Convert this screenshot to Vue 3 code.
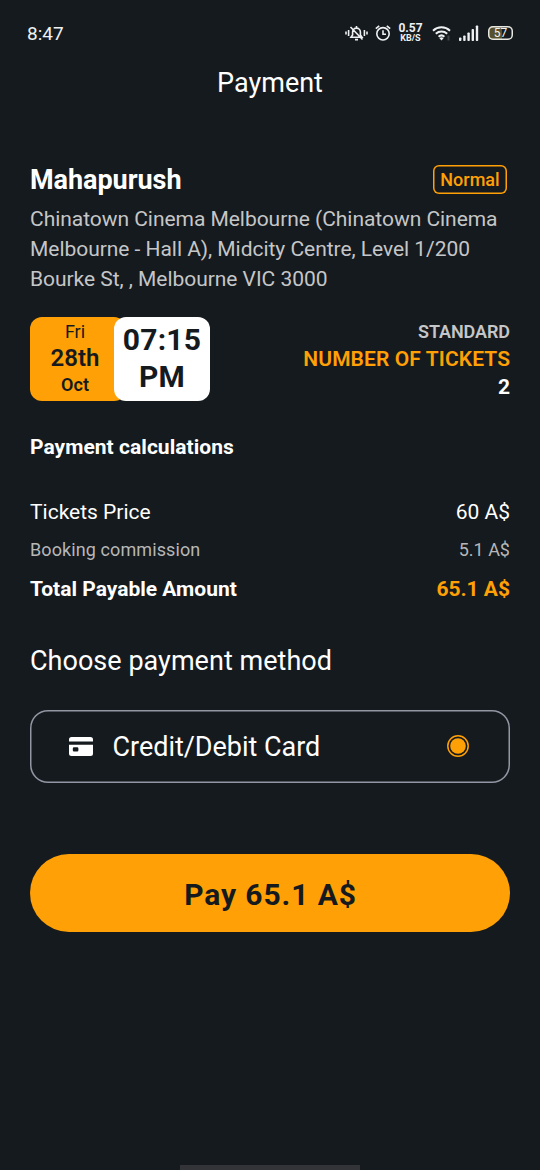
<script setup>
const priceRows = [
  { kind: 'regular', label: 'Tickets Price', value: '60 A$' },
  { kind: 'muted', label: 'Booking commission', value: '5.1 A$' },
  { kind: 'total', label: 'Total Payable Amount', value: '65.1 A$' },
]
</script>

<template>
  <div class="screen">
    <div class="status">
      <span class="clock">8:47</span>
      <div class="indicators">
        <svg class="mute" width="23" height="18" viewBox="0 0 23 18" fill="none" stroke="#eef0f2" stroke-width="1.6">
          <path d="M1 7.500v3M3.600 6v6M19.400 6v6M22 7.500v3" />
          <path d="M6 13.2h11L15.400 11V8a3.900 3.900 0 0 0-7.800 0v3zM10 15.600h3M11.500 2v2M5.500 3l12 12.500" />
        </svg>
        <svg class="alarm" width="16" height="18" viewBox="0 0 16 18" fill="none" stroke="#eef0f2" stroke-width="1.6">
          <circle cx="8" cy="9.800" r="6.200" />
          <path d="M.8 4.700 4.200 1.800M15.200 4.700 11.800 1.800M8 6.300V10.300h3" />
        </svg>
        <div class="speed"><b>0.57</b><span>KB/S</span></div>
        <svg class="wifi" width="20" height="17" viewBox="0 0 20 17" fill="none" stroke="#eef0f2" stroke-width="2">
          <path d="M1 5.700a12.500 12.500 0 0 1 17 0M3.800 8.800a8.400 8.400 0 0 1 11.400 0M6.600 11.700a4.300 4.300 0 0 1 5.800 0" />
          <path d="M7.400 13.200 9.500 15.600l2.100-2.400a3 3 0 0 0-4.200 0z" fill="#eef0f2" stroke="none" />
          <path d="M16.500 10.500v5" stroke="#3c4245" stroke-width="2" />
        </svg>
        <svg class="signal" width="20" height="17" viewBox="0 0 20 17" fill="#eef0f2">
          <rect x="0" y="12.500" width="2.400" height="3.500" rx=".8" />
          <rect x="4.200" y="10.500" width="2.400" height="5.500" rx=".8" />
          <rect x="8.400" y="7.500" width="2.400" height="8.500" rx=".8" />
          <rect x="12.600" y="4" width="2.400" height="12" rx=".8" />
          <rect x="16.800" y="0.500" width="2.400" height="15.500" rx=".8" />
        </svg>
        <div class="battery"><span>57</span></div>
      </div>
    </div>

    <h1 class="title">Payment</h1>

    <main class="content">
      <div class="movie">
        <h2>Mahapurush</h2>
        <span class="tag">Normal</span>
      </div>
      <p class="address">
        Chinatown Cinema Melbourne (Chinatown Cinema<br />Melbourne - Hall A), Midcity Centre, Level 1/200<br />Bourke St, , Melbourne VIC 3000
      </p>

      <div class="session">
        <div class="date">
          <span class="day">Fri</span>
          <span class="num">28th</span>
          <span class="month">Oct</span>
        </div>
        <div class="time"><span>07:15</span><span>PM</span></div>
        <div class="tickets">
          <span class="class">STANDARD</span>
          <span class="caption">NUMBER OF TICKETS</span>
          <span class="count">2</span>
        </div>
      </div>

      <h3 class="subhead">Payment calculations</h3>
      <div class="prices">
        <div v-for="row in priceRows" :key="row.kind" class="row" :class="row.kind">
          <span class="label">{{ row.label }}</span>
          <span class="value">{{ row.value }}</span>
        </div>
      </div>

      <h3 class="choose">Choose payment method</h3>
      <div class="method">
        <svg width="24" height="19" viewBox="0 0 24 19">
          <path d="M0 4.500V2.500A2.500 2.500 0 0 1 2.500 0h19A2.500 2.500 0 0 1 24 2.500v2z" fill="#fff" />
          <path fill-rule="evenodd" d="M0 7.800h24v8.700a2.500 2.500 0 0 1-2.500 2.500h-19A2.500 2.500 0 0 1 0 16.500zM5 10.300a1.200 1.200 0 0 0-1.200 1.200v1.700A1.200 1.200 0 0 0 5 14.400h3.200a1.200 1.200 0 0 0 1.200-1.200v-1.700a1.200 1.200 0 0 0-1.200-1.200z" fill="#fff" />
        </svg>
        <span class="name">Credit/Debit Card</span>
        <svg class="radio" width="22" height="22" viewBox="0 0 22 22">
          <circle cx="11" cy="11" r="10.200" fill="none" stroke="#ffa006" stroke-width="1.500" />
          <circle cx="11" cy="11" r="7.800" fill="#ffa006" />
        </svg>
      </div>

      <button class="pay">Pay 65.1 A$</button>
    </main>
    <div class="handle"></div>
  </div>
</template>

<style>
body {
  background: #151a1e;
}
</style>

<style scoped>
.screen {
  width: 540px;
  height: 1170px;
  box-sizing: border-box;
  display: flex;
  flex-direction: column;
  overflow: hidden;
  background: #151a1e;
  color: #fff;
  font-family: Roboto, 'Liberation Sans', sans-serif;
}
h1, h2, h3, p {
  margin: 0;
}
.status {
  height: 66px;
  padding: 0 27px;
  display: flex;
  align-items: center;
  justify-content: space-between;
}
.clock {
  font-size: 19px;
  color: #eef0f2;
  padding-top: 1px;
}
.indicators {
  display: flex;
  align-items: center;
}
.alarm {
  margin-left: 7px;
  margin-right: 1px;
}
.speed {
  width: 25px;
  margin-left: 6px;
  display: flex;
  flex-direction: column;
  align-items: center;
  color: #eef0f2;
}
.speed b {
  font-size: 12px;
  line-height: 12px;
  margin-top: -2px;
}
.speed span {
  font-size: 9px;
  line-height: 8px;
  font-weight: 700;
}
.wifi {
  margin-left: 9px;
}
.signal {
  margin-left: 7px;
}
.battery {
  width: 25px;
  height: 14px;
  box-sizing: border-box;
  margin-left: 9px;
  box-shadow: inset 0 0 0 1.500px #e8e8e2;
  border-radius: 5px;
  display: flex;
  align-items: center;
  background: linear-gradient(90deg, #56502f 58%, #151a1e 58%);
}
.battery span {
  width: 100%;
  text-align: center;
  font-size: 12px;
  line-height: 12px;
  color: #f2f2ec;
}
.title {
  height: 34px;
  line-height: 34px;
  text-align: center;
  font-size: 27px;
  font-weight: 400;
}
.content {
  padding: 62px 30px 0;
}
.movie {
  height: 34px;
  padding-right: 3px;
  display: flex;
  align-items: center;
  justify-content: space-between;
}
.movie h2 {
  font-size: 27px;
  line-height: 34px;
  padding-top: 2px;
  font-weight: 700;
  letter-spacing: -0.050px;
}
.tag {
  width: 74px;
  height: 29px;
  box-sizing: border-box;
  box-shadow: inset 0 0 0 1.500px #ffa006;
  border-radius: 6px;
  color: #ffa006;
  font-size: 18px;
  line-height: 29px;
  font-weight: 500;
  text-align: center;
}
.address {
  margin-top: 8px;
  font-size: 21px;
  line-height: 30px;
  letter-spacing: -0.040px;
  color: #c5c6c7;
  white-space: nowrap;
}
.session {
  margin-top: 22.500px;
  height: 84px;
  display: flex;
}
.date {
  width: 90px;
  padding-right: 6px;
  border-radius: 12px;
  background: #ffa006;
  color: #151a1e;
  display: flex;
  flex-direction: column;
  align-items: center;
  margin-right: -12px;
}
.day {
  font-size: 18px;
  line-height: 30px;
}
.num {
  font-size: 24px;
  line-height: 22px;
  font-weight: 600;
}
.month {
  font-size: 18px;
  line-height: 31px;
  font-weight: 600;
}
.time {
  width: 96px;
  border-radius: 12px;
  background: #fff;
  color: #151a1e;
  display: flex;
  flex-direction: column;
  align-items: center;
  padding-top: 4px;
  box-sizing: border-box;
  font-size: 30px;
  line-height: 37.500px;
  font-weight: 700;
  letter-spacing: 0.200px;
}
.tickets {
  margin-left: auto;
  display: flex;
  flex-direction: column;
  align-items: flex-end;
  font-weight: 600;
}
.class {
  font-size: 18px;
  line-height: 30px;
  letter-spacing: -0.080px;
  color: #c5c6c7;
}
.caption {
  font-size: 21px;
  line-height: 24px;
  letter-spacing: 0.100px;
  margin-right: -0.100px;
  color: #ffa006;
}
.count {
  font-size: 21px;
  line-height: 33px;
  font-weight: 700;
}
.subhead {
  margin-top: 31.500px;
  font-size: 21px;
  line-height: 30px;
  font-weight: 700;
  letter-spacing: 0.040px;
}
.prices {
  margin-top: 30px;
}
.row {
  display: flex;
  justify-content: space-between;
  font-size: 21px;
  line-height: 40px;
}
.muted {
  font-size: 18px;
  line-height: 36px;
  color: #b5b7b8;
}
.muted .label {
  letter-spacing: 0.100px;
}
.total {
  font-weight: 700;
  line-height: 42px;
}
.total .value {
  color: #ffa006;
}
.choose {
  margin-top: 33px;
  font-size: 27px;
  line-height: 36px;
  font-weight: 400;
  letter-spacing: 0.030px;
}
.method {
  margin-top: 30.500px;
  height: 73px;
  box-sizing: border-box;
  box-shadow: inset 0 0 0 1.500px #9396a3;
  border-radius: 18px;
  padding: 0 41px 0 39px;
  display: flex;
  align-items: center;
}
.name {
  margin-left: 19.500px;
  padding-top: 1px;
  font-size: 27px;
  letter-spacing: -0.030px;
}
.radio {
  margin-left: auto;
}
.pay {
  display: block;
  width: 480px;
  height: 78px;
  margin-top: 71.500px;
  padding: 2px 0 0 1px;
  border: 0;
  border-radius: 39px;
  background: #ffa006;
  color: #151a1e;
  font-family: inherit;
  font-size: 30px;
  font-weight: 700;
  letter-spacing: 0.900px;
}
.handle {
  width: 180px;
  height: 5px;
  margin: auto auto 0;
  background: #323437;
}
</style>
